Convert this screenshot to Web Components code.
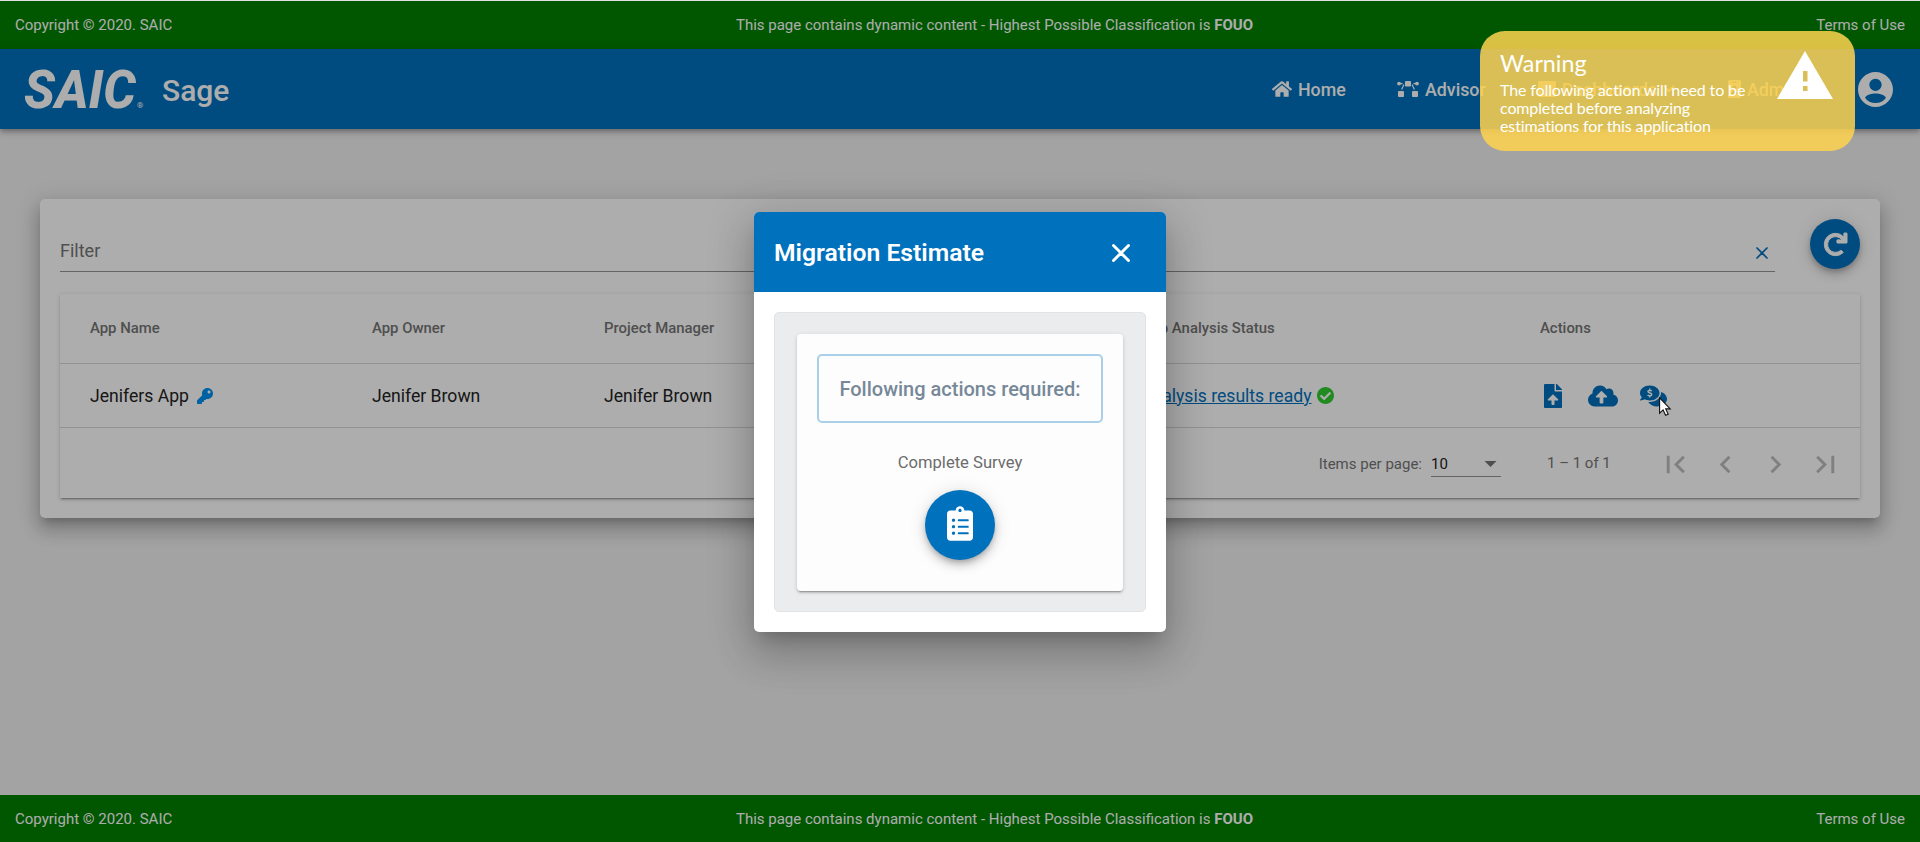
<!DOCTYPE html>
<html lang="en">
<head>
<meta charset="utf-8">
<title>Sage</title>
<style>
html,body{margin:0;height:100%;overflow:hidden}
body{font-family:Roboto,"Liberation Sans",sans-serif}
</style>
</head>
<body>
<sage-app></sage-app>
<script>
const ICONS = {
  home:['0 0 576 512','<path d="M280.37 148.26L96 300.11V464a16 16 0 0 0 16 16l112.06-.29a16 16 0 0 0 15.92-16V368a16 16 0 0 1 16-16h64a16 16 0 0 1 16 16v95.64a16 16 0 0 0 16 16.05L464 480a16 16 0 0 0 16-16V300L295.67 148.26a12.19 12.19 0 0 0-15.3 0zM571.6 251.47L488 182.56V44.05a12 12 0 0 0-12-12h-56a12 12 0 0 0-12 12v72.61L318.47 43a48 48 0 0 0-61 0L4.34 251.47a12 12 0 0 0-1.6 16.9l25.5 31A12 12 0 0 0 45.15 301l235.22-193.74a12.19 12.19 0 0 1 15.3 0L530.9 301a12 12 0 0 0 16.9-1.6l25.5-31a12 12 0 0 0-1.7-16.93z"/>'],
  advisor:['0 0 22 16','<rect x="8" y="0" width="6" height="5.5" rx="1"/><rect x="1" y="10" width="6" height="6" rx="1"/><rect x="15" y="10" width="6" height="6" rx="1"/><circle cx="2" cy="2.6" r="1.9"/><circle cx="20" cy="2.6" r="1.9"/><path d="M2 2.6h3.500M16.500 2.6H20M7 3.500L4.6 8.500M15 3.500l2.4 5" fill="none" stroke="currentColor" stroke-width="1.2"/>'],
  board:['0 0 18 16','<path fill-rule="evenodd" d="M1.5 0h15A1.5 1.5 0 0 1 18 1.5v13a1.5 1.5 0 0 1-1.500 1.500h-15A1.500 1.500 0 0 1 0 14.500v-13A1.500 1.500 0 0 1 1.500 0zM3 9v3h2V9zm4-5v8h2V4zm4 3v5h2V7z"/>'],
  chevron:['0 0 12 8','<path d="M1 1l5 5 5-5" fill="none" stroke="currentColor" stroke-width="2"/>'],
  badge:['0 0 13 18','<path fill-rule="evenodd" d="M1.500 0h10A1.500 1.500 0 0 1 13 1.500v15a1.500 1.500 0 0 1-1.500 1.500h-10A1.500 1.500 0 0 1 0 16.500v-15A1.500 1.500 0 0 1 1.500 0zM4.500 1.800v1h4v-1zM6.500 5.500a2 2 0 1 0 0 4 2 2 0 0 0 0-4zM3 14h7c0-2-1.500-3-3.500-3S3 12 3 14z"/>'],
  user:['2 2 20 20','<path d="M12 2C6.480 2 2 6.480 2 12s4.480 10 10 10 10-4.480 10-10S17.520 2 12 2zm0 3.800c1.900 0 3.500 1.600 3.500 3.500s-1.600 3.500-3.500 3.500-3.500-1.600-3.500-3.500 1.600-3.500 3.500-3.500zm0 13.900c-2.500 0-4.710-1-6-3 .8-1.700 4-2.400 6-2.400s5.200.7 6 2.400c-1.290 2-3.500 3-6 3z"/>'],
  redo:['0 0 512 512','<path stroke="currentColor" stroke-width="22" d="M500.33 0h-47.41a12 12 0 0 0-12 12.57l4 82.76A247.42 247.42 0 0 0 256 8C119.34 8 7.9 119.53 8 256.19 8.1 393.07 119.1 504 256 504a247.1 247.1 0 0 0 166.180-63.910 12 12 0 0 0 .48-17.430l-34-34a12 12 0 0 0-16.380-.55A176 176 0 1 1 402.100 157.800l-101.530-4.870a12 12 0 0 0-12.570 12v47.410a12 12 0 0 0 12 12h200.330a12 12 0 0 0 12-12V12a12 12 0 0 0-12-12z"/>'],
  key:['0 0 512 512','<path d="M512 176.001C512 273.203 433.202 352 336 352c-11.220 0-22.190-1.062-32.827-3.069l-24.012 27.014A23.999 23.999 0 0 1 261.223 384H224v40c0 13.255-10.745 24-24 24h-40v40c0 13.255-10.745 24-24 24H24c-13.255 0-24-10.745-24-24v-78.059c0-6.365 2.529-12.470 7.029-16.971l161.802-161.802C163.108 213.814 160 195.271 160 176 160 78.798 238.797.001 335.999 0 433.488-.001 512 78.511 512 176.001zM336 128c0 26.510 21.490 48 48 48s48-21.490 48-48-21.490-48-48-48-48 21.490-48 48z"/>'],
  check:['8 8 496 496','<path d="M504 256c0 136.967-111.033 248-248 248S8 392.967 8 256 119.033 8 256 8s248 111.033 248 248zM227.314 387.314l184-184c6.248-6.248 6.248-16.379 0-22.627l-22.627-22.627c-6.248-6.249-16.379-6.249-22.628 0L216 308.118l-70.059-70.059c-6.248-6.248-16.379-6.248-22.628 0l-22.627 22.627c-6.248 6.248-6.248 16.379 0 22.627l104 104c6.249 6.249 16.379 6.249 22.628.001z"/>'],
  file:['0 0 384 512','<path d="M224 136V0H24C10.700 0 0 10.700 0 24v464c0 13.300 10.700 24 24 24h336c13.300 0 24-10.700 24-24V160H248c-13.200 0-24-10.800-24-24zm65.180 216.010H224v80c0 8.840-7.160 16-16 16h-32c-8.840 0-16-7.160-16-16v-80H94.820c-14.280 0-21.410-17.290-11.270-27.360l96.420-95.700c6.650-6.610 17.390-6.610 24.040 0l96.420 95.700c10.150 10.070 3.030 27.360-11.250 27.360zM377 105L279.100 7c-4.500-4.500-10.600-7-17-7H256v128h128v-6.100c0-6.300-2.500-12.400-7-16.900z"/>'],
  cloud:['0 0 640 512','<path d="M537.600 226.600c4.100-10.700 6.400-22.400 6.400-34.600 0-53-43-96-96-96-19.700 0-38.100 6-53.300 16.200C367 64.200 315.300 32 256 32c-88.400 0-160 71.600-160 160 0 2.700.1 5.400.2 8.100C40.200 219.800 0 273.200 0 336c0 79.500 64.500 144 144 144h368c70.700 0 128-57.300 128-128 0-61.900-44-113.600-102.400-125.400zM393.400 288H328v112c0 8.800-7.200 16-16 16h-48c-8.800 0-16-7.200-16-16V288h-65.400c-14.300 0-21.400-17.200-11.300-27.300l105.400-105.400c6.200-6.200 16.400-6.200 22.600 0l105.400 105.400c10.100 10.100 2.900 27.300-11.300 27.300z"/>'],
  comments:['0 0 576 512','<path d="M416 192c0-88.400-93.100-160-208-160S0 103.600 0 192c0 34.300 14.100 65.900 38 92-13.400 30.200-35.500 54.200-35.800 54.500-2.200 2.300-2.800 5.700-1.500 8.700S4.800 352 8 352c36.600 0 66.900-12.300 88.700-25 32.200 15.700 70.300 25 111.300 25 114.900 0 208-71.600 208-160zm122 220c23.900-26 38-57.700 38-92 0-66.900-53.500-124.200-129.300-148.100.9 6.600 1.300 13.300 1.300 20.100 0 105.900-107.700 192-240 192-10.800 0-21.300-.8-31.700-1.900C207.800 439.600 281.800 480 368 480c41 0 79.100-9.200 111.300-25 21.800 12.700 52.100 25 88.700 25 3.200 0 6.100-1.900 7.300-4.800 1.300-2.900.7-6.300-1.500-8.700-.3-.3-22.400-24.200-35.800-54.500z"/><path d="M253 151c-14-16-84-24-84 10 0 40 82 20 82 62 0 36-70 32-90 10M208 96v40M208 248v42" fill="none" stroke="#fff" stroke-width="30"/>'],
  clipboard:['0 0 384 512','<path d="M336 64h-80c0-35.300-28.700-64-64-64s-64 28.700-64 64H48C21.500 64 0 85.500 0 112v352c0 26.500 21.500 48 48 48h288c26.500 0 48-21.500 48-48V112c0-26.500-21.500-48-48-48zM96 424c-13.300 0-24-10.700-24-24s10.700-24 24-24 24 10.700 24 24-10.700 24-24 24zm0-96c-13.300 0-24-10.700-24-24s10.700-24 24-24 24 10.700 24 24-10.700 24-24 24zm0-96c-13.300 0-24-10.700-24-24s10.700-24 24-24 24 10.700 24 24-10.700 24-24 24zm96-192c13.300 0 24 10.700 24 24s-10.700 24-24 24-24-10.700-24-24 10.700-24 24-24zm128 368c0 4.400-3.600 8-8 8H168c-4.400 0-8-3.600-8-8v-16c0-4.400 3.600-8 8-8h144c4.400 0 8 3.600 8 8v16zm0-96c0 4.400-3.600 8-8 8H168c-4.400 0-8-3.600-8-8v-16c0-4.400 3.600-8 8-8h144c4.400 0 8 3.600 8 8v16zm0-96c0 4.400-3.600 8-8 8H168c-4.400 0-8-3.600-8-8v-16c0-4.400 3.600-8 8-8h144c4.400 0 8 3.600 8 8v16z"/>'],
  close:['0 0 18 18','<path d="M1.500 1.500l15 15M16.500 1.500l-15 15" fill="none" stroke="currentColor" stroke-width="var(--w,2.900)" stroke-linecap="round"/>'],
  first:['0 0 24 24','<path d="M18.410 16.590L13.820 12l4.590-4.590L17 6l-6 6 6 6zM6 6h2v12H6z"/>'],
  prev:['0 0 24 24','<path d="M15.410 7.410L14 6l-6 6 6 6 1.410-1.410L10.830 12z"/>'],
  next:['0 0 24 24','<path d="M10 6L8.590 7.410 13.170 12l-4.580 4.590L10 18l6-6z"/>'],
  last:['0 0 24 24','<path d="M5.590 7.410L10.180 12l-4.590 4.590L7 18l6-6-6-6zM16 6h2v12h-2z"/>'],
  caret:['0 0 12 6','<path d="M0 0h12L6 6z"/>'],
  warn:['0 0 56 48','<path fill-rule="evenodd" d="M28 0l28 48H0zM26 20v10.500h4.500V20zm0 15v5h4.500v-5z"/>'],
  cursor:['0 0 12 19','<path d="M.6.8v15.400l3.500-3.300 2.500 5.400 2.600-1.100-2.500-5.300h4.500z" fill="#fff" stroke="#111" stroke-width="1.100"/>']
};
const define = (tag, css, html) => customElements.define(tag, class extends HTMLElement {
  constructor(){
    super();
    const t = document.createElement('template');
    t.innerHTML = `<style>*{box-sizing:border-box}${css}</style>${html}`;
    this.attachShadow({mode:'open'}).append(t.content.cloneNode(true));
  }
});

customElements.define('sage-icon', class extends HTMLElement {
  connectedCallback(){
    if (this.shadowRoot) return;
    const [box, body] = ICONS[this.getAttribute('name')];
    this.attachShadow({mode:'open'}).innerHTML =
      `<style>:host{display:block;flex:none}svg{display:block;width:100%;height:100%;overflow:visible}</style><svg viewBox="${box}" fill="currentColor">${body}</svg>`;
  }
});

define('sage-banner', `
:host{display:grid;grid-template-columns:1fr auto 1fr;align-items:center;background:#008000;color:#fff;font-size:15px;padding:0 15px}
span:last-child{text-align:right}
.mid{padding-left:69px}
`, `<span>Copyright © 2020. SAIC</span><span class="mid">This page contains dynamic content - Highest Possible Classification is <b>FOUO</b></span><span>Terms of Use</span>`);

define('sage-logo', `
:host{display:block;width:120px;height:40px;flex:none}
svg{display:block;overflow:visible}
`, `<svg width="120" height="40" fill="#fff"><text x="-1" y="39" font-family="Roboto" font-weight="800" font-style="italic" font-size="54" textLength="112" lengthAdjust="spacingAndGlyphs">SAIC</text><text x="112" y="39" font-family="Roboto" font-size="8">®</text></svg>`);

define('sage-nav-item', `
:host{display:flex;align-items:center;gap:6px;font-size:17.8px;font-weight:500;white-space:nowrap;flex:none}
`, `<slot name="icon"></slot><span><slot></slot></span><slot name="end"></slot>`);

define('sage-header', `
:host{display:flex;align-items:center;height:80px;padding:0 27px 0 25px;background:#0071bd;color:#fff;box-shadow:0 2px 4px -1px rgba(0,0,0,.2),0 4px 5px rgba(0,0,0,.14),0 1px 10px rgba(0,0,0,.12);position:relative}
h1{margin:4px 0 0 17px;font-size:30px;font-weight:500;line-height:40px;width:70px}
nav{display:flex;flex:1;justify-content:flex-end}
sage-nav-item{width:var(--w)}
.user{width:35px;height:35px}
`, `<sage-logo></sage-logo><h1>Sage</h1>
<nav>
<sage-nav-item style="--w:125px"><sage-icon slot="icon" name="home" style="width:20px;height:18px"></sage-icon>Home</sage-nav-item>
<sage-nav-item style="--w:141px"><sage-icon slot="icon" name="advisor" style="width:22px;height:16px"></sage-icon>Advisor</sage-nav-item>
<sage-nav-item style="--w:190px"><sage-icon slot="icon" name="board" style="width:18px;height:16px"></sage-icon>Dashboards<sage-icon slot="end" name="chevron" style="width:12px;height:8px"></sage-icon></sage-nav-item>
<sage-nav-item style="--w:130px"><sage-icon slot="icon" name="badge" style="width:13px;height:18px"></sage-icon>Admin</sage-nav-item>
</nav><sage-icon class="user" name="user"></sage-icon>`);

define('sage-round-button', `
:host{display:flex;align-items:center;justify-content:center;flex:none;border-radius:50%;background:#0071bd;color:#fff;box-shadow:0 3px 5px -1px rgba(0,0,0,.2),0 6px 10px rgba(0,0,0,.14),0 1px 18px rgba(0,0,0,.12)}
`, `<slot></slot>`);

define('sage-filter', `
:host{display:flex;align-items:flex-start;justify-content:space-between;height:75px}
.field{display:flex;width:1715px;height:53px;align-items:center;justify-content:space-between;border-bottom:1px solid #949494;color:#757575;font-size:18px;padding:10px 7px 0 0}
.field span{line-height:22px;margin-top:2px}
.x{--w:2.6;width:12px;height:12px;color:#0071bd;margin-top:5px}
sage-round-button{width:50px;height:50px}
`, `<div class="field"><span>Filter</span><sage-icon class="x" name="close"></sage-icon></div>
<sage-round-button><sage-icon name="redo" style="width:23px;height:23px"></sage-icon></sage-round-button>`);

define('sage-paginator', `
:host{display:flex;align-items:center;height:71px;padding-right:17px;justify-content:flex-end;font-size:15px;color:#757575}
.l{margin-top:1px}
.sel{display:flex;align-items:center;justify-content:space-between;width:70px;height:27px;margin-left:9px;padding:1px 4px 0 0;border-bottom:1px solid #949494;color:#222}
.sel sage-icon{width:13px;height:6px;color:#757575}
.range{margin:-2px 49px 0 46px;width:62px;white-space:nowrap}
.nav{display:flex;gap:15px;color:#bdbdbd;margin-top:2px}
.nav sage-icon{width:35px;height:35px}
`, `<span class="l">Items per page:</span><div class="sel"><span>10</span><sage-icon name="caret"></sage-icon></div><span class="range">1 – 1 of 1</span>
<div class="nav"><sage-icon name="first"></sage-icon><sage-icon name="prev"></sage-icon><sage-icon name="next"></sage-icon><sage-icon name="last"></sage-icon></div>`);

define('sage-table', `
:host{display:block;height:204px;background:#fff;box-shadow:0 3px 1px -2px rgba(0,0,0,.2),0 2px 2px rgba(0,0,0,.14),0 1px 5px rgba(0,0,0,.12)}
.row{display:grid;grid-template-columns:282px 232px 530px 406px 1fr;padding-left:30px;align-items:center;border-bottom:1px solid #d8d8d8;white-space:nowrap}
.head{height:70px;font-size:14.9px;font-weight:500;color:#757575;padding-bottom:2px}
.body{height:64px;font-size:17.6px;color:#222}
.c{display:flex;align-items:center}
a{color:#0071bd;text-decoration:underline}
`, `<div class="row head"><span>App Name</span><span>App Owner</span><span>Project Manager</span><span>Repo Analysis Status</span><span>Actions</span></div>
<div class="row body"><span class="c" style="padding-top:1px;gap:8px">Jenifers App<sage-icon name="key" style="width:16px;height:16px;color:#0090f0"></sage-icon></span><span>Jenifer Brown</span><span>Jenifer Brown</span>
<span class="c" style="gap:5px;padding-left:7px"><a>Analysis results ready</a><sage-icon name="check" style="width:17px;height:17px;color:#32cd32"></sage-icon></span>
<span class="c" style="color:#0071bd;padding-left:4px"><sage-icon name="file" style="width:18px;height:24px;margin-right:26px"></sage-icon><sage-icon name="cloud" style="width:30px;height:24px;margin-right:22px"></sage-icon><sage-icon name="comments" style="width:27px;height:24px"></sage-icon></span></div>
<sage-paginator></sage-paginator>`);

define('sage-panel', `
:host{display:block;margin:70px 40px 0;height:319px;padding:20px;border-radius:5px;background:#fff;box-shadow:0 7px 8px -4px rgba(0,0,0,.2),0 12px 17px 2px rgba(0,0,0,.14),0 5px 22px 4px rgba(0,0,0,.12)}
`, `<slot></slot>`);

define('sage-dialog', `
:host{display:block;width:412px;height:420px;border-radius:5px;overflow:hidden;background:#fff}
header{display:flex;align-items:center;justify-content:space-between;height:80px;padding:0 36px 0 20px;background:#0071bd;color:#fff}
h2{margin:2px 0 0;font-size:24.7px;font-weight:600;line-height:30px}
.x{width:18px;height:18px;margin-top:2px}
.body{margin:20px;height:300px;padding:21px 22px;border:1px solid #e2e3e5;border-radius:5px;background:#ebecee}
.card{height:257px;padding:20px;border-radius:4px;background:#fdfdfd;display:flex;flex-direction:column;align-items:center;box-shadow:0 3px 1px -2px rgba(0,0,0,.2),0 2px 2px rgba(0,0,0,.14),0 1px 5px rgba(0,0,0,.12)}
.req{display:flex;align-items:center;justify-content:center;width:286px;height:69px;border:2px solid #a9d0e8;border-radius:5px;color:#778899;font-size:20px;font-weight:500;white-space:nowrap}
.txt{margin:30px 0 17px;font-size:16.6px;line-height:20px;color:#6c6c6c}
sage-round-button{width:70px;height:70px}
`, `<header><h2>Migration Estimate</h2><sage-icon class="x" name="close"></sage-icon></header>
<div class="body"><div class="card"><div class="req">Following actions required:</div><div class="txt">Complete Survey</div>
<sage-round-button><sage-icon name="clipboard" style="width:26px;height:35px;margin-bottom:4px"></sage-icon></sage-round-button></div></div>`);

define('sage-toast', `
:host{display:flex;justify-content:space-between;width:375px;height:120px;padding:17px 22px 0 20px;border-radius:25px;background:rgba(255,211,79,.85);color:#fff;font-family:Lato,sans-serif}
.t{font-size:23.3px;line-height:30px;margin-bottom:3px}
.m{font-size:16px;letter-spacing:-.12px;line-height:18px;white-space:nowrap}
.w{width:56px;height:48px;margin-top:3px}
`, `<div><div class="t">Warning</div><div class="m">The following action will need to be<br>completed before analyzing<br>estimations for this application</div></div><sage-icon class="w" name="warn"></sage-icon>`);

define('sage-app', `
:host{display:block;position:relative;height:842px;overflow:hidden}
.page{display:flex;flex-direction:column;height:842px;background:#f0f0f0;border-top:1px solid #e0e0e0}
.top{height:48px}
.bottom{height:47px;margin-top:auto}
.scrim{position:absolute;inset:1px 0 0;background:rgba(0,0,0,.32)}
.over{position:absolute;inset:0;display:flex;align-items:flex-start;justify-content:center;padding-top:212px}
.over sage-dialog{box-shadow:0 11px 15px -7px rgba(0,0,0,.2),0 24px 38px 3px rgba(0,0,0,.14),0 9px 46px 8px rgba(0,0,0,.12)}
sage-toast{position:absolute;left:1480px;top:31px}
.cur{position:absolute;left:1659px;top:397px;width:12px;height:19px}
`, `<div class="page"><sage-banner class="top"></sage-banner><sage-header></sage-header>
<sage-panel><sage-filter></sage-filter><sage-table></sage-table></sage-panel>
<sage-banner class="bottom"></sage-banner></div>
<div class="scrim"></div><div class="over"><sage-dialog></sage-dialog></div><sage-toast></sage-toast><sage-icon class="cur" name="cursor"></sage-icon>`);
</script>
</body>
</html>
